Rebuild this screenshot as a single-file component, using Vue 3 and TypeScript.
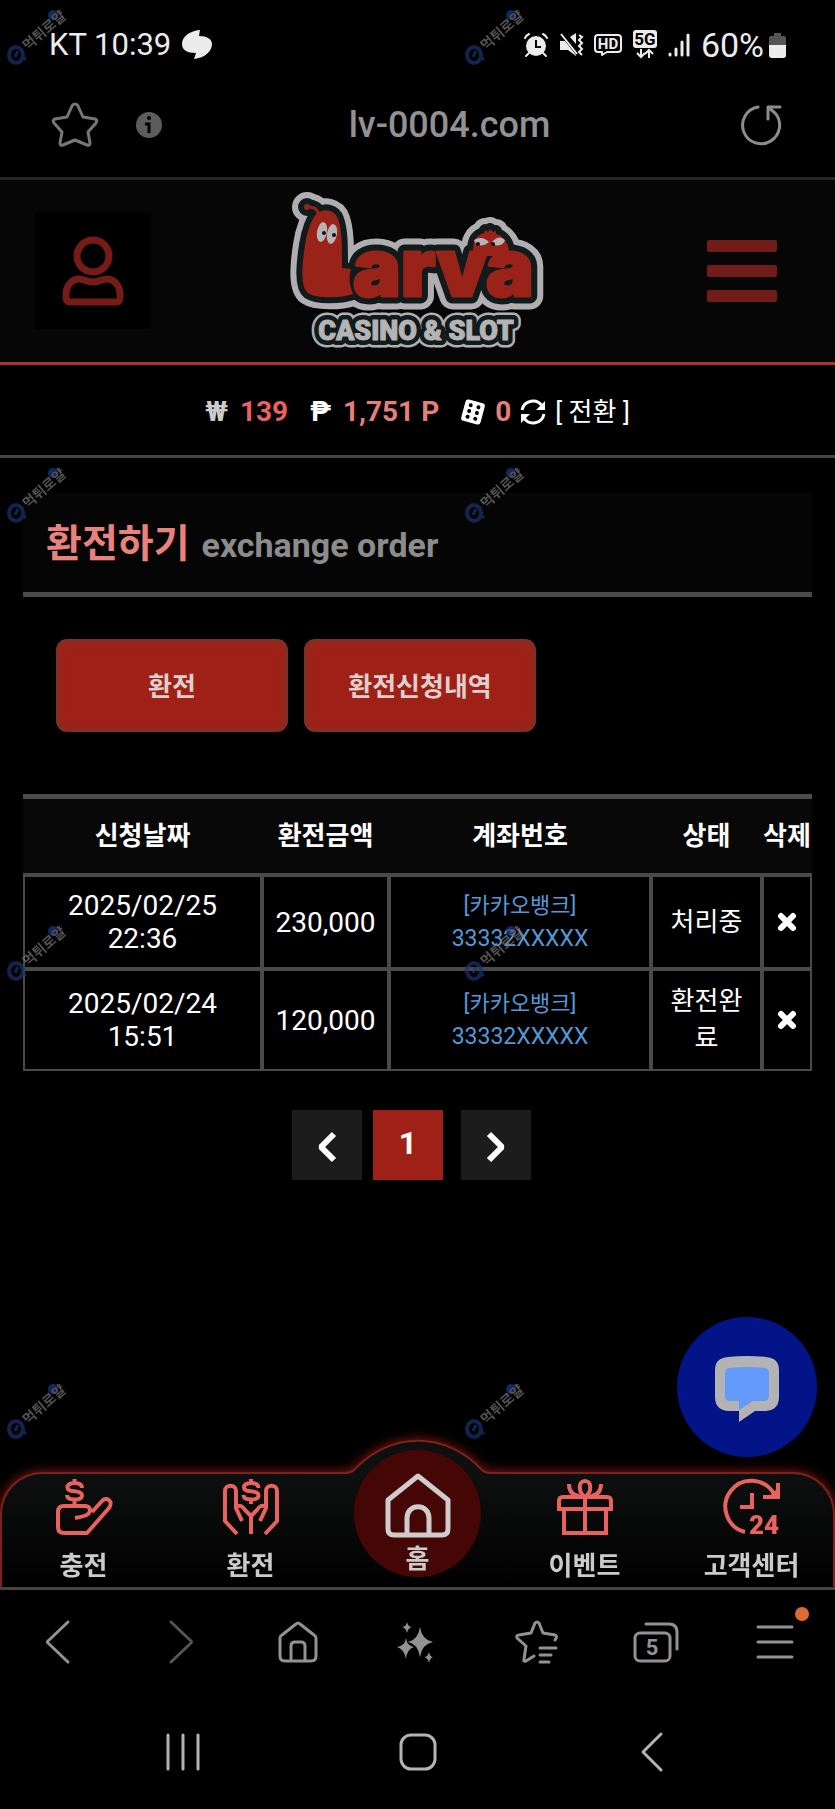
<script setup lang="ts">
interface Order {
  date: string
  time: string
  amount: string
  bank: string
  account: string
  status: string
}

const orders: Order[] = [
  { date: '2025/02/25', time: '22:36', amount: '230,000', bank: '[카카오뱅크]', account: '33332XXXXX', status: '처리중' },
  { date: '2025/02/24', time: '15:51', amount: '120,000', bank: '[카카오뱅크]', account: '33332XXXXX', status: '환전완료' },
]

const columns = ['신청날짜', '환전금액', '계좌번호', '상태', '삭제']

// Outline layers of the logo, painted from the outermost to the innermost
const logoLayers = [
  { name: 'rim', color: '#b0aeb0', grow: 24 },
  { name: 'edge', color: '#111b1b', grow: 12 },
  { name: 'body', color: '#992318', grow: 0 },
]
const sloganLayers = [
  { name: 'rim', color: '#b0aeb0', width: 15 },
  { name: 'edge', color: '#111b1b', width: 10 },
  { name: 'face', color: '#b4b4b4', width: 1 },
]

const stamps = [0, 1, 2, 3, 4, 5, 6, 7]
</script>

<template>
  <div class="page">
    <div class="status">
      <span class="status-text">KT 10:39</span>
      <svg class="status-app" width="32" height="30" viewBox="0 0 32 30"><path fill="#ececec" d="M19 0C8 1 1 7 1 14c0 6 5 9 14 9l-2 6c11-1 18-8 18-15 0-5-5-8-13-8z" /></svg>
      <div class="status-icons">
        <svg width="24" height="24" viewBox="0 0 24 24">
          <path fill="none" stroke="#ececec" stroke-width="2" stroke-linecap="round" d="M1 5c1-2 2-3 4-4M23 5c-1-2-2-3-4-4M5 20l-3 3M19 20l3 3" />
          <circle cx="12" cy="13" r="10" fill="#ececec" />
          <path fill="none" stroke="#000" stroke-width="2" d="M12 7v7h5" />
        </svg>
        <svg width="24" height="24" viewBox="0 0 24 24">
          <path fill="#ececec" d="M1 8h5l11 14v1l-8-6H1zM11 4l6-4v11z" />
          <path fill="none" stroke="#ececec" stroke-width="2" d="M2 1l16 20M20 2l3 2-3 3 3 3-3 3 3 3-3 3 3 3" />
        </svg>
        <svg width="28" height="24" viewBox="0 0 28 24">
          <path fill="none" stroke="#ececec" stroke-width="2" stroke-linejoin="round" d="M4 2h20q3 0 3 3v11q0 3-3 3H13l-5 3v-3H4q-3 0-3-3V5q0-3 3-3z" />
          <text x="14" y="16" text-anchor="middle" class="badge-text" fill="#ececec" font-size="15">HD</text>
        </svg>
        <svg width="24" height="30" viewBox="0 0 24 30">
          <rect width="24" height="18" rx="3" fill="#ececec" />
          <text x="12" y="15" text-anchor="middle" class="badge-text" fill="#000" font-size="17">5G</text>
          <path fill="none" stroke="#ececec" stroke-width="2" d="M8 19v8M4 23l4 4 4-4M16 28v-8M12 24l4-4 4 4" />
        </svg>
        <svg width="22" height="24" viewBox="0 0 22 24"><path stroke="#ececec" stroke-width="3" stroke-linecap="round" d="M2 21v1M8 16v6M14 9v13M20 2v20" /></svg>
        <span class="status-text charge">60%</span>
        <svg class="battery" width="17" height="25" viewBox="0 0 17 25">
          <path fill="#555" d="M5 0h7v3h3q2 0 2 2v8H0V5q0-2 2-2h3z" /><path fill="#ececec" d="M0 12h17v10q0 3-3 3H3q-3 0-3-3z" />
        </svg>
      </div>
    </div>

    <div class="address">
      <div class="address-side">
        <button class="plain" aria-label="북마크"><svg width="46" height="46" viewBox="0 0 46 46"><path fill="none" stroke="#777" stroke-width="3" stroke-linejoin="round" d="M23 2q2 0 3 2l5 11 12 2q3 1 1 4l-8 9 2 11q0 3-3 2l-12-5-12 5q-3 1-3-2l2-11-8-9q-2-3 1-4l12-2 5-11q1-2 3-2z" /></svg></button>
        <button class="plain" aria-label="사이트 정보"><svg width="26" height="26" viewBox="0 0 26 26"><circle cx="13" cy="13" r="13" fill="#5d5d5d" /><circle cx="13" cy="6" r="2" fill="#000" /><path fill="none" stroke="#000" stroke-width="3" d="M9 12h4v9" /></svg></button>
      </div>
      <span class="url">lv-0004.com</span>
      <div class="address-side end">
        <button class="plain" aria-label="새로고침"><svg width="42" height="42" viewBox="0 0 42 42"><path fill="none" stroke="#8c8c8c" stroke-width="3" stroke-linecap="round" stroke-linejoin="round" d="M17 3A18.500 18.500 0 1 0 34 9M39 3H27v12M27 3l7 6" /></svg></button>
      </div>
    </div>

    <header class="top">
      <button class="profile" aria-label="내 정보">
        <svg width="62" height="72" viewBox="0 0 62 72"><g fill="none" stroke="#751c18" stroke-width="7" stroke-linejoin="round"><circle cx="31" cy="21" r="16" /><path d="M8 67q-4 0-4-5v-2c0-11 7-16 13-16 5 0 7 3 14 3s9-3 14-3c6 0 13 5 13 16v2q0 5-4 5z" /></g></svg>
      </button>
      <a href="#" class="logo" aria-label="Larva Casino &amp; Slot">
        <svg width="256" height="162" viewBox="0 0 256 162">
          <g v-for="l in logoLayers" :key="l.name" :fill="l.color" :stroke="l.color" stroke-linejoin="round" stroke-linecap="round">
            <path :stroke-width="l.grow" d="M27 23c8-5 18-3 21 6 4 11 4 25 4 49l9 1c-3 9-1 17 2 25-12 4-36 5-45-1-8-6-6-28-3-48 2-14 7-27 12-32z" />
            <path :stroke-width="l.grow + 3" fill="none" d="M18 17c5 0 9 2 10 6" />
            <circle cx="17" cy="17" r="3" :stroke-width="l.grow" />
            <path :stroke-width="l.grow" d="M184 66c-3-14 2-21 10-23l1-3 3 2 2-3 3 3 3-1v3c8 2 14 10 13 22z" />
            <text x="63" y="106" :stroke-width="l.grow + 3" class="logo-text">arva</text>
          </g>
          <g fill="#b9b4b4">
            <ellipse cx="32" cy="42" rx="5" ry="10" transform="rotate(10 32 42)" /><ellipse cx="42" cy="44" rx="5" ry="10" transform="rotate(10 42 44)" />
            <path d="M184 50q8-5 15 2-7 6-13 2zM202 52q7-8 13-2-2 7-11 5z" />
          </g>
          <g fill="#111"><circle cx="34" cy="43" r="2" /><circle cx="44" cy="45" r="2" /><circle cx="188" cy="54" r="2" /><circle cx="203" cy="54" r="2" /></g>
          <text v-for="l in sloganLayers" :key="l.name" x="126" y="150" text-anchor="middle" :stroke="l.color" :fill="l.color" :stroke-width="l.width" class="slogan">CASINO &amp; SLOT</text>
        </svg>
      </a>
      <button class="burger" aria-label="메뉴"><span></span><span></span><span></span></button>
    </header>

    <section class="balance">
      <span class="won">₩</span>
      <strong class="cash">139</strong>
      <span class="peso">₱</span>
      <strong class="point">1,751 P</strong>
      <svg class="dice" width="26" height="26" viewBox="0 0 26 26">
        <g transform="rotate(15 13 13)"><rect x="3" y="2" width="20" height="22" rx="3" fill="#fff" /><g fill="#000"><circle cx="9" cy="7" r="2" /><circle cx="17" cy="7" r="2" /><circle cx="9" cy="13" r="2" /><circle cx="17" cy="13" r="2" /><circle cx="9" cy="19" r="2" /><circle cx="17" cy="19" r="2" /></g></g>
      </svg>
      <strong class="point">0</strong>
      <svg width="26" height="26" viewBox="0 0 26 26"><g fill="none" stroke="#fff" stroke-width="3"><path d="M2 11C4 1 17-1 22 7M24 15C22 25 9 27 4 19" /></g><path fill="#fff" d="M25 2v9h-9zM1 24v-9h9z" /></svg>
      <button class="plain convert">[ 전환 ]</button>
    </section>

    <main>
      <h1 class="title"><span class="title-ko">환전하기</span><span class="title-en">exchange order</span></h1>
      <div class="tabs">
        <button class="tab">환전</button>
        <button class="tab">환전신청내역</button>
      </div>

      <table>
        <colgroup><col class="c-date" /><col class="c-amount" /><col class="c-account" /><col class="c-status" /><col class="c-delete" /></colgroup>
        <thead><tr><th v-for="c in columns" :key="c" scope="col">{{ c }}</th></tr></thead>
        <tbody>
          <tr v-for="o in orders" :key="o.date">
            <td class="date">{{ o.date }}<br />{{ o.time }}</td>
            <td>{{ o.amount }}</td>
            <td class="account"><span class="bank">{{ o.bank }}</span><br />{{ o.account }}</td>
            <td class="state">{{ o.status }}</td>
            <td><button class="plain" aria-label="삭제"><svg width="20" height="20" viewBox="0 0 20 20"><path stroke="#fff" stroke-width="6" stroke-linecap="round" d="M4 4l12 12M16 4L4 16" /></svg></button></td>
          </tr>
        </tbody>
      </table>

      <nav class="pager" aria-label="페이지">
        <button aria-label="이전"><svg width="20" height="32" viewBox="0 0 20 32"><path fill="none" stroke="#fff" stroke-width="6" stroke-linejoin="bevel" d="M17 3L4 16l13 13" /></svg></button>
        <button class="current">1</button>
        <button class="next" aria-label="다음"><svg width="20" height="32" viewBox="0 0 20 32"><path fill="none" stroke="#fff" stroke-width="6" stroke-linejoin="bevel" d="M3 3l13 13L3 29" /></svg></button>
      </nav>
    </main>

    <button class="chat" aria-label="상담">
      <svg width="66" height="66" viewBox="0 0 66 66"><path fill="#b3b3b3" d="M14 1q19-2 38 0 13 1 13 13v27q0 13-13 14H41L25 66V55H14Q1 54 1 41V14Q1 2 14 1z" /><path fill="#649bfb" d="M16 12q17-2 34 0 5 0 5 5v23q0 5-5 5H39L25 54V45h-9q-5 0-5-5V17q0-5 5-5z" /></svg>
    </button>

    <footer class="dock">
      <nav class="menu">
        <div class="menu-glow">
          <div class="menu-back">
            <svg class="hump" width="144" height="48" viewBox="0 0 144 48"><path fill="#0e0f0f" d="M0 35C6 34 8 31 12 27C46-6 98-6 132 27c4 4 6 7 12 8v5H0z" /><path fill="none" stroke="#7e211b" stroke-width="2" d="M0 34q5 0 8-3C44-8 100-8 136 31q3 3 8 3" /></svg>
          </div>
        </div>
        <a href="#" class="item">
          <svg width="56" height="56" viewBox="0 0 56 56"><g fill="none" stroke="#e8635f" stroke-width="4"><path d="M18.500 0v4M18.500 20v6M26 9c0-4-3-5-7.500-5-5.500 0-7 2-7 4.500 0 3 3.500 3.500 7 3.800 4.500.4 7.500 1.200 7.500 4.200 0 3.500-4 4-7.500 4-4.500 0-7.500-1-7.500-4.500" /><path stroke-linejoin="round" d="M36 33l10-11c4-5 12 0 7 7L31 54H8q-6 0-6-6V33q0-6 6-6h21c5 0 6 4 4 7s-7 4-14 5" /></g></svg>
          <span>충전</span>
        </a>
        <a href="#" class="item">
          <svg width="56" height="56" viewBox="0 0 56 56"><g fill="none" stroke="#e8635f" stroke-width="4"><path d="M28 0v4M28 20v5M35.500 9c0-4-3-5-7.500-5-5.500 0-7 2-7 4.500 0 3 3.500 3.500 7 3.800 4.500.4 7.500 1.200 7.500 4.200 0 3.500-4 4-7.500 4-4.500 0-7.500-1-7.500-4.500" /><path d="M14 55L2 42V12c0-7 11-7 11 0v17l6 13M42 55l12-13V12c0-7-11-7-11 0v17l-6 13M13 28c4-3 7 0 9 3l6 6v18M43 28c-4-3-7 0-9 3l-6 6" /></g></svg>
          <span>환전</span>
        </a>
        <a href="#" class="item home">
          <svg width="66" height="66" viewBox="0 0 66 66"><g fill="none" stroke="#d0cccc" stroke-width="5" stroke-linejoin="round"><path d="M3 28L33 4l30 24v29q0 6-6 6H9q-6 0-6-6z" /><path d="M22 62V46c0-15 22-15 22 0v16" /></g></svg>
          <span>홈</span>
        </a>
        <a href="#" class="item">
          <svg width="56" height="56" viewBox="0 0 56 56"><g fill="none" stroke="#e8635f" stroke-width="4"><path d="M2 30v-8q0-4 4-4h44q4 0 4 4v8zM7 30v24h42V30M28 18v36M28 18c-7-5-7-16 0-16s7 11 0 16M12 5c0 7 3 11 10 12M44 5c0 7-3 11-10 12" /></g></svg>
          <span>이벤트</span>
        </a>
        <a href="#" class="item">
          <svg width="56" height="56" viewBox="0 0 56 56"><g fill="none" stroke="#e8635f" stroke-width="4"><path d="M21 53A26 26 0 1 1 50 15M54 4v14H39M28 14v14H16" /></g><path fill="#e8635f" d="M56 20H42L55 8z" /><text x="25" y="55" class="hours" font-size="26">24</text></svg>
          <span>고객센터</span>
        </a>
      </nav>

      <div class="browser">
        <button class="plain" aria-label="뒤로"><svg width="44" height="44" viewBox="0 0 44 44"><path d="M30 2L10 21q-1 1 0 2l20 19" /></svg></button>
        <button class="plain dim" aria-label="앞으로"><svg width="44" height="44" viewBox="0 0 44 44"><path d="M14 2l20 19q1 1 0 2L14 42" /></svg></button>
        <button class="plain" aria-label="홈"><svg width="44" height="44" viewBox="0 0 44 44"><path d="M4 18q0-2 2-3L20 4q2-2 4 0l14 11q2 1 2 3v18q0 5-5 5H9q-5 0-5-5zM15 41V26q0-4 4-4h6q4 0 4 4v15" /></svg></button>
        <button class="plain" aria-label="AI"><svg width="44" height="44" viewBox="0 0 44 44"><g class="solid"><path d="M25 7q2 13 13 15-11 2-13 15-2-13-12-15Q23 20 25 7zM11 18q1 8 8 9-7 2-8 12-2-10-9-12 8-1 9-9zM12 2q1 5 5 5-4 1-5 6-1-5-5-6 4 0 5-5zM34 32q1 5 4 5-3 1-4 6-1-5-5-6 4 0 5-5z" /></g></svg></button>
        <button class="plain" aria-label="북마크 목록"><svg width="44" height="44" viewBox="0 0 44 44"><path d="M19 36l-8 5q-3 1-2-2l2-13-9-8q-1-3 2-3l12-2 4-10q2-2 4 0l4 10 12 2q3 1 0 5M25 28h16M25 35h11M25 42h9" /></svg></button>
        <button class="plain" aria-label="탭"><svg width="46" height="44" viewBox="0 0 46 44"><path d="M13 4h23q8 0 8 8v17" /><rect x="2" y="13" width="35" height="28" rx="5" /><text x="19" y="35" text-anchor="middle" class="count" font-size="22">5</text></svg></button>
        <button class="plain more" aria-label="더보기"><svg width="44" height="44" viewBox="0 0 44 44"><path d="M5 7h34M5 22h34M5 37h34" /></svg><i class="dot"></i></button>
      </div>

      <div class="system">
        <button class="plain" aria-label="최근 앱"><svg width="40" height="40" viewBox="0 0 40 40"><path d="M5 3v34M20 3v34M35 3v34" /></svg></button>
        <button class="plain" aria-label="홈 화면"><svg width="40" height="40" viewBox="0 0 40 40"><rect x="3" y="3" width="34" height="34" rx="10" /></svg></button>
        <button class="plain" aria-label="이전"><svg width="40" height="40" viewBox="0 0 40 40"><path d="M28 2L10 20l18 18" /></svg></button>
      </div>
    </footer>

    <div class="stamps" aria-hidden="true">
      <svg v-for="s in stamps" :key="s" width="80" height="80" viewBox="0 0 80 80">
        <circle cx="53" cy="15" r="5" fill="#1b3a86" />
        <ellipse cx="16" cy="55" rx="7" ry="8" fill="none" stroke="#1a3270" stroke-width="4" />
        <path stroke="#1a3270" stroke-width="3" d="M15 57l3-6M22 56l4 4" />
        <text x="0" y="0" transform="translate(28 51) rotate(-41)" class="stamp-text" font-size="14">먹튀로얄</text>
      </svg>
    </div>
  </div>
</template>

<style>
body {
  margin: 0;
  background: #000;
}
</style>

<style scoped>
.page {
  position: relative;
  display: flex;
  flex-direction: column;
  min-height: 100vh;
  overflow: hidden;
  background: #000;
  color: #fff;
  font-family: Roboto, "Noto Sans CJK KR", sans-serif;
}
svg { display: block; flex: none; overflow: visible; }
button { font: inherit; color: inherit; cursor: pointer; }
.plain { padding: 0; border: 0; background: none; }

.status {
  display: flex;
  align-items: center;
  height: 90px;
  padding: 0 49px;
  color: #ececec;
}
.status-text { font-size: 31px; line-height: 36px; }
.charge { font-size: 34px; }
.status-app { margin-left: 10px; }
.status-icons { display: flex; align-items: center; gap: 11px; margin-left: auto; }
.battery { margin-left: -6px; }
.badge-text { font-family: Roboto, sans-serif; font-weight: 700; }

.address {
  display: grid;
  grid-template-columns: 1fr auto 1fr;
  align-items: center;
  height: 70px;
  padding: 0 52px 17px;
}
.address-side { display: flex; align-items: center; gap: 38px; }
.end { justify-content: flex-end; }
.url { padding-left: 64px; color: #929292; font-size: 36px; font-weight: 500; line-height: 40px; }

.top {
  display: grid;
  grid-template-columns: 1fr auto 1fr;
  align-items: center;
  height: 182px;
  padding: 0 35px;
  border-top: 3px solid #252525;
  border-bottom: 3px solid #ac352b;
  background: #060606;
}
.profile {
  display: grid;
  place-items: center;
  width: 116px;
  height: 116px;
  padding: 0;
  border: 0;
  background: #000;
}
.logo-text { font-family: Inter, sans-serif; font-size: 80px; font-weight: 900; }
.slogan { font-family: Roboto, sans-serif; font-size: 27px; font-weight: 900; stroke-linejoin: round; }
.burger { display: flex; flex-direction: column; justify-self: end; gap: 13px; width: 70px; margin-right: 23px; padding: 0; border: 0; background: none; }
.burger span { height: 12px; border-radius: 2px; background: #711c18; }

.balance {
  display: flex;
  box-sizing: border-box;
  align-items: center;
  justify-content: center;
  gap: 9px;
  height: 93px;
  padding-top: 3px;
  border-bottom: 3px solid #444;
  font-size: 28px;
  line-height: 36px;
}
.won { margin-right: 3px; color: #ccc; font-weight: 700; }
.cash { color: #e8635f; }
.peso { margin: 0 3px 0 13px; font-weight: 700; }
.point { color: #e57f79; }
.dice { margin-left: 12px; }
.convert { font-size: 26px; }

main { flex: 1; padding: 35px 23px; }
.title {
  display: flex;
  align-items: baseline;
  gap: 12px;
  height: 95px;
  margin: 0;
  padding: 4px 23px 0;
  border-bottom: 5px solid #4a4a4a;
  background: #050505;
  line-height: 95px;
}
.title-ko { color: #e9827c; font-size: 39px; font-weight: 700; }
.title-en { color: #8c8c8c; font-size: 34px; font-weight: 700; }
.tabs { display: flex; gap: 16px; padding: 42px 33px 62px; }
.tab {
  width: 232px;
  height: 93px;
  padding: 0 0 3px;
  border: 2px solid #7c3028;
  border-radius: 11px;
  background: #9e2016;
  box-shadow: inset 0 0 10px #863028;
  color: #dccfce;
  font-size: 26px;
  font-weight: 700;
}

table { width: 100%; border-spacing: 0; border-top: 5px solid #4a4a4a; table-layout: fixed; }
.c-date { width: 239px; }
.c-amount { width: 127px; }
.c-status { width: 111px; }
.c-delete { width: 50px; }
th, td { box-sizing: border-box; padding: 0; text-align: center; }
th { height: 76px; padding-bottom: 6px; border-bottom: 2px solid #4a4a4a; background: #080808; font-size: 26px; font-weight: 700; white-space: nowrap; }
td { height: 94px; border: 2px solid #4a4a4a; font-size: 28px; line-height: 33px; }
tbody tr:last-child td { height: 102px; }
.account { color: #5797d6; font-size: 23px; }
.bank { font-size: 22px; }
.state { padding: 0 14px; font-size: 26px; line-height: 37px; word-break: break-all; }
td .plain { display: block; margin: 0 auto; }

.pager { display: flex; justify-content: center; gap: 11px; padding: 39px 12px 0 0; }
.pager button {
  display: grid;
  place-items: center;
  width: 70px;
  height: 70px;
  padding: 4px 0 0;
  border: 0;
  background: #1c1c1c;
  font-size: 32px;
  font-weight: 700;
}
.pager .current { padding: 0 0 4px; background: #9e2016; }
.pager .next { margin-left: 7px; }

.chat {
  position: absolute;
  right: 18px;
  bottom: 352px;
  display: grid;
  place-items: center;
  width: 140px;
  height: 140px;
  padding: 4px 0 0;
  border: 0;
  border-radius: 50%;
  background: #021488;
}

.dock { position: relative; }
.menu {
  position: relative;
  display: grid;
  grid-template-columns: repeat(5, 1fr);
  grid-template-rows: 115px;
  align-items: end;
  border-bottom: 3px solid #444;
}
.menu-glow { position: absolute; inset: 0; clip-path: inset(-60px 0 0 0); }
.menu-back {
  position: absolute;
  inset: 0;
  border: 2px solid #7e211b;
  border-bottom: 0;
  border-radius: 42px 42px 0 0;
  background: linear-gradient(#0e0f0f, #000);
  filter: drop-shadow(0 0 6px #8c180e);
}
.hump { position: absolute; top: -35px; left: 50%; margin-left: -72px; }
.item {
  position: relative;
  display: flex;
  flex-direction: column;
  align-items: center;
  gap: 18px;
  padding-bottom: 8px;
  color: #cbcbcb;
  font-size: 26px;
  font-weight: 700;
  line-height: 26px;
  text-decoration: none;
}
.hours { fill: #e8635f; font-family: Roboto, sans-serif; font-weight: 900; }
.home {
  box-sizing: border-box;
  justify-self: center;
  width: 127px;
  height: 127px;
  margin-bottom: 10px;
  padding: 22px 0 0;
  gap: 8px;
  border-radius: 50%;
  background: #450705;
}

.browser { display: grid; grid-template-columns: repeat(7, 1fr); place-items: center; height: 104px; }
.browser svg, .system svg { fill: none; stroke: #929292; stroke-width: 3; stroke-linecap: round; stroke-linejoin: round; }
.browser .dim svg { stroke: #555; }
.browser .solid { fill: #929292; stroke: none; }
.count { fill: #929292; stroke: none; font-family: Roboto, sans-serif; font-weight: 700; }
.more { position: relative; }
.dot { position: absolute; top: -13px; right: -12px; width: 14px; height: 14px; border-radius: 50%; background: #df6a32; }
.system { display: grid; grid-template-columns: repeat(3, 1fr); place-items: center; height: 115px; padding: 0 65px; }
.system svg { stroke: #b4b4b4; }

.stamps {
  position: absolute;
  inset: 0;
  display: grid;
  grid-template-columns: repeat(2, 427px);
  grid-auto-rows: 458px;
  column-gap: 31px;
  overflow: hidden;
  opacity: 0.7;
  pointer-events: none;
}
.stamp-text { fill: #777; font-family: "Noto Sans CJK KR", sans-serif; font-weight: 700; }
</style>
